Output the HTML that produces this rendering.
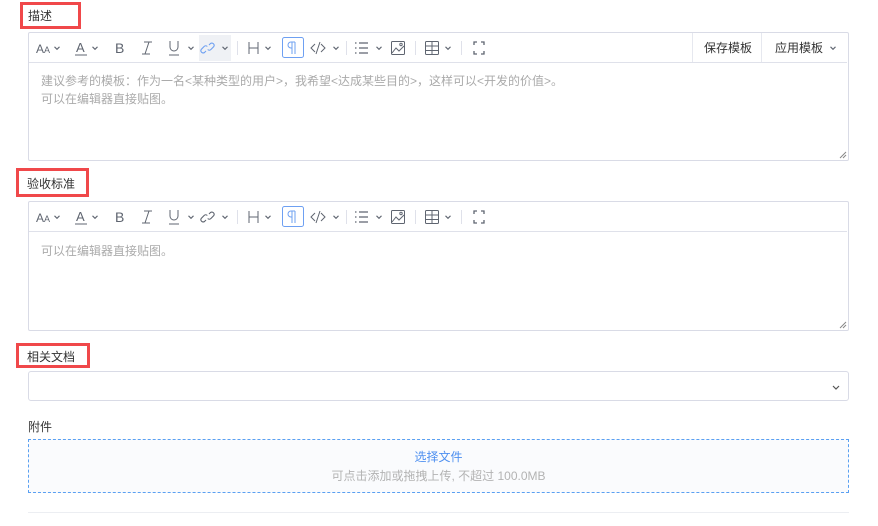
<!DOCTYPE html>
<html><head><meta charset="utf-8"><style>
*{box-sizing:border-box;margin:0;padding:0}
body{width:878px;height:526px;background:#fff;font-family:"Liberation Sans","Noto Sans CJK SC",sans-serif;position:relative;overflow:hidden;color:#333}
.abs{position:absolute}
.lbl{font-size:12px;color:#333}
.red{border:3px solid #f0484a;}
.ed{border:1px solid #d9dbe6;border-radius:2px}
.tb{position:absolute;left:0;top:0;width:818px;height:30px;border-bottom:1px solid #dfe1ea}
.ph{position:absolute;left:12px;font-size:12px;color:#aaa;line-height:18px}
</style></head><body>

<svg width="0" height="0" style="position:absolute">
<defs>
<g id="chev"><path d="M-2.5 -1.2 L0 1.3 L2.5 -1.2" fill="none" stroke="#5f6570" stroke-width="1.1"/></g>
<g id="common" font-family="Liberation Sans, sans-serif" fill="none" stroke="#5f6570" stroke-width="1">
 <text x="7" y="20" font-size="12" fill="#5f6570" stroke="none">A</text><text x="15" y="20" font-size="9" fill="#5f6570" stroke="none">A</text>
 <use href="#chev" x="28" y="15"/>
 <text x="47" y="19" font-size="13" fill="#5f6570" stroke="none">A</text><line x1="46" y1="22" x2="58" y2="22"/>
 <use href="#chev" x="66" y="15"/>
 <text x="86" y="20" font-size="14" fill="#5f6570" stroke="none">B</text>
 <path d="M115 9h8M113 21h8M120 9l-4 12"/>
 <path d="M141 8v6a4 4 0 0 0 8 0v-6M140 22h10"/>
 <use href="#chev" x="162" y="15"/>
 <line x1="208.5" y1="8" x2="208.5" y2="22" stroke="#dfe1ea"/>
 <path d="M220 9v12M229 9v12M220 15h9"/>
 <use href="#chev" x="239" y="15"/>
 <rect x="253.5" y="4.5" width="21" height="20" rx="2" stroke="#6ea0f2"/>
 <path d="M263 9v12M266 9v12M266 9h-4a3 3 0 0 0 0 6h1" stroke="#6ea0f2"/>
 <path d="M286 11l-4 4 4 4M292 11l4 4-4 4M291 9l-4 12"/>
 <use href="#chev" x="307" y="15"/>
 <line x1="317.5" y1="8" x2="317.5" y2="22" stroke="#dfe1ea"/>
 <path d="M330 10h9M330 15h9M330 20h9M326 10h1.5M326 15h1.5M326 20h1.5" stroke-width="1.3"/>
 <use href="#chev" x="350" y="15"/>
 <rect x="362.5" y="8.5" width="13" height="13" rx="1"/><path d="M363 20l4-5 3 3 5-5"/><circle cx="372" cy="11.5" r="1.2"/>
 <line x1="386.5" y1="8" x2="386.5" y2="22" stroke="#dfe1ea"/>
 <rect x="396.5" y="8.5" width="13" height="13" rx="1"/><path d="M396 13h14M396 17.5h14M403 8v14"/>
 <use href="#chev" x="419" y="15"/>
 <line x1="432.5" y1="8" x2="432.5" y2="22" stroke="#dfe1ea"/>
 <path d="M445 12v-3h3M452 9h3v3M455 18v3h-3M448 21h-3v-3" stroke-width="1.3"/>
</g>
</defs></svg>

<div class="abs red" style="left:20px;top:2px;width:61px;height:27px"></div>
<div class="abs lbl" style="left:28px;top:7px">描述</div>

<div class="abs ed" style="left:28px;top:32px;width:821px;height:129px">
 <svg class="abs" style="left:0;top:0" width="819" height="30">
  <rect x="170" y="2" width="32" height="26" fill="#eff1f5"/>
  <use href="#common"/>
  <path d="M177 18l-1.5 1.5a2.3 2.3 0 0 1-3.2-3.2l2.8-2.8a2.3 2.3 0 0 1 3.2 0M180 12l1.5-1.5a2.3 2.3 0 0 1 3.2 3.2l-2.8 2.8a2.3 2.3 0 0 1-3.2 0" fill="none" stroke="#6ea0f2" stroke-width="1.1"/>
  <use href="#chev" x="196" y="15"/>
  <line x1="663.5" y1="0" x2="663.5" y2="30" stroke="#e6e8ef"/>
  <line x1="732.5" y1="0" x2="732.5" y2="30" stroke="#e6e8ef"/>
  <text x="675" y="19" font-size="12" fill="#333" font-family="Liberation Sans, Noto Sans CJK SC, sans-serif">保存模板</text>
  <text x="746" y="19" font-size="12" fill="#333" font-family="Liberation Sans, Noto Sans CJK SC, sans-serif">应用模板</text>
  <use href="#chev" x="804" y="15"/>
 </svg>
 <div class="tb"></div>
 <div class="ph" style="top:39px">建议参考的模板：作为一名&lt;某种类型的用户&gt;，我希望&lt;达成某些目的&gt;，这样可以&lt;开发的价值&gt;。<br>可以在编辑器直接贴图。</div>
 <svg class="abs" style="right:1px;bottom:1px" width="8" height="8"><path d="M1 7L7 1M4 7L7 4" stroke="#888" stroke-width="1"/></svg>
</div>

<div class="abs red" style="left:16px;top:168px;width:73px;height:29px"></div>
<div class="abs lbl" style="left:27px;top:175px">验收标准</div>

<div class="abs ed" style="left:28px;top:201px;width:821px;height:130px">
 <svg class="abs" style="left:0;top:0" width="819" height="30">
  <use href="#common"/>
  <path d="M177 18l-1.5 1.5a2.3 2.3 0 0 1-3.2-3.2l2.8-2.8a2.3 2.3 0 0 1 3.2 0M180 12l1.5-1.5a2.3 2.3 0 0 1 3.2 3.2l-2.8 2.8a2.3 2.3 0 0 1-3.2 0" fill="none" stroke="#5f6570" stroke-width="1.1"/>
  <use href="#chev" x="196" y="15"/>
 </svg>
 <div class="tb"></div>
 <div class="ph" style="top:40px">可以在编辑器直接贴图。</div>
 <svg class="abs" style="right:1px;bottom:1px" width="8" height="8"><path d="M1 7L7 1M4 7L7 4" stroke="#888" stroke-width="1"/></svg>
</div>

<div class="abs red" style="left:16px;top:343px;width:74px;height:25px"></div>
<div class="abs lbl" style="left:27px;top:348px">相关文档</div>

<div class="abs ed" style="left:28px;top:371px;width:821px;height:30px;border-radius:3px">
 <svg class="abs" style="right:8px;top:13px" width="8" height="5"><path d="M1 1l3 3 3-3" fill="none" stroke="#555" stroke-width="1.2"/></svg>
</div>

<div class="abs lbl" style="left:28px;top:418px">附件</div>
<div class="abs" style="left:28px;top:439px;width:821px;height:54px;border:1px dashed #5aa0f2;background:#fafbfd;text-align:center">
 <div style="font-size:12px;color:#4d8ff0;margin-top:9px;line-height:16px">选择文件</div>
 <div style="font-size:12px;color:#b3b3b3;margin-top:3px;line-height:16px">可点击添加或拖拽上传, 不超过 100.0MB</div>
</div>
<div class="abs" style="left:28px;top:512px;width:821px;height:1px;background:#eceef2"></div>
</body></html>
